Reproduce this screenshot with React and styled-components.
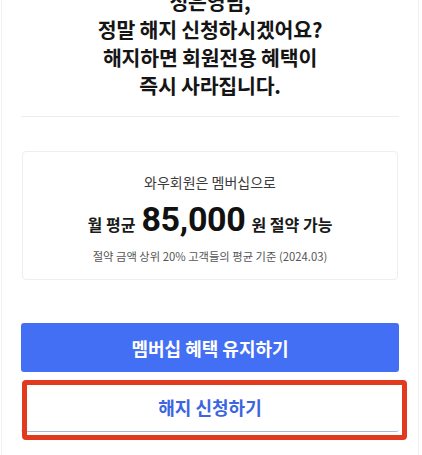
import React from "react";
import styled, { createGlobalStyle } from "styled-components";

const GlobalStyle = createGlobalStyle`
  html, body {
    margin: 0;
    padding: 0;
    background: #ffffff;
  }
  body {
    font-family: "Noto Sans CJK KR", "Noto Sans", sans-serif;
    color: #111111;
  }
`;

export default function App() {
  return (
    <Frame>
      <GlobalStyle />
      <Title>
        <TitleLine>정은영님,</TitleLine>
        <TitleLine>정말 해지 신청하시겠어요?</TitleLine>
        <TitleLine>해지하면 회원전용 혜택이</TitleLine>
        <TitleLine>즉시 사라집니다.</TitleLine>
      </Title>

      <Divider />

      <SavingCard>
        <CardLead>와우회원은 멤버십으로</CardLead>
        <AmountRow>
          <AmountLabel>월 평균</AmountLabel>
          <Amount>85,000</Amount>
          <AmountLabel>원 절약 가능</AmountLabel>
        </AmountRow>
        <CardNote>절약 금액 상위 20% 고객들의 평균 기준 (2024.03)</CardNote>
      </SavingCard>

      <Actions>
        <ActionButton primary>멤버십 혜택 유지하기</ActionButton>
        <CancelSlot>
          <ActionButton>해지 신청하기</ActionButton>
          {/* red annotation box drawn over the cancel button */}
          <Highlight />
        </CancelSlot>
      </Actions>
    </Frame>
  );
}

const Frame = styled.div`
  width: 418px;
  height: 455px;
  margin: 0 1px;
  border-left: 1px solid #f1f1f1;
  border-right: 1px solid #f1f1f1;
  overflow: hidden;
  box-sizing: border-box;
  padding: 0 19px;
`;

const Title = styled.div`
  margin-top: -13px;
  display: flex;
  flex-direction: column;
  align-items: center;
`;

const TitleLine = styled.div`
  font-size: 20.5px;
  font-weight: 700;
  line-height: 28px;
  color: #151515;
  letter-spacing: -0.2px;
`;

const Divider = styled.hr`
  margin: 17px 0 0;
  border: none;
  border-top: 1px solid #ededed;
`;

const SavingCard = styled.div`
  margin: 34px 1px 0 1px;
  height: 129px;
  box-sizing: border-box;
  border: 1px solid #eeeeee;
  border-radius: 4px;
  display: flex;
  flex-direction: column;
  align-items: center;
  padding-top: 20px;
`;

const CardLead = styled.div`
  font-size: 14px;
  line-height: 20px;
  color: #3a3a3a;
`;

const AmountRow = styled.div`
  margin-top: 7px;
  display: flex;
  align-items: baseline;
  gap: 6px;
  height: 44px;
`;

const AmountLabel = styled.span`
  font-size: 16px;
  font-weight: 700;
  color: #1a1a1a;
`;

const Amount = styled.span`
  font-family: Roboto, "Noto Sans", sans-serif;
  font-size: 34px;
  font-weight: 700;
  color: #111111;
  letter-spacing: -0.3px;
`;

const CardNote = styled.div`
  margin-top: 5px;
  font-size: 11.3px;
  line-height: 16px;
  color: #555555;
`;

const Actions = styled.div`
  margin-top: 43px;
  display: flex;
  flex-direction: column;
  gap: 11px;
`;

const ActionButton = styled.button`
  display: block;
  width: 100%;
  height: 49px;
  border: none;
  border-radius: 3px;
  font-family: inherit;
  font-size: 18px;
  font-weight: 700;
  cursor: pointer;
  background: ${({ primary }) => (primary ? "#436ff5" : "#ffffff")};
  color: ${({ primary }) => (primary ? "#ffffff" : "#3c65e2")};
  border-bottom: ${({ primary }) => (primary ? "none" : "1px solid #a9b9d6")};
`;

const CancelSlot = styled.div`
  position: relative;
`;

const Highlight = styled.div`
  position: absolute;
  top: -3px;
  left: 1px;
  right: -8px;
  bottom: -8px;
  border: 5px solid #e23a1e;
  border-radius: 4px;
  pointer-events: none;
`;
